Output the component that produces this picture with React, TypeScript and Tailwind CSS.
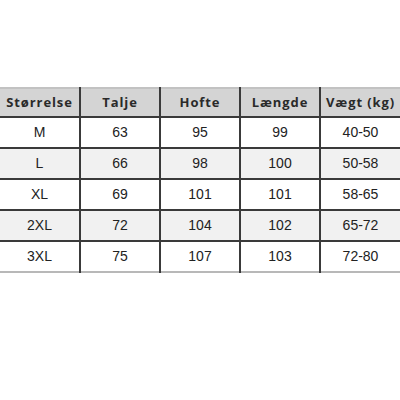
const headers = ["Størrelse", "Talje", "Hofte", "Længde", "Vægt (kg)"];

const rows = [
  ["M", "63", "95", "99", "40-50"],
  ["L", "66", "98", "100", "50-58"],
  ["XL", "69", "101", "101", "58-65"],
  ["2XL", "72", "104", "102", "65-72"],
  ["3XL", "75", "107", "103", "72-80"],
];

export default function App() {
  return (
    <div className="w-[400px] h-[400px] bg-white pt-[87px]">
      <table className="w-full table-fixed border-collapse">
        <thead>
          <tr className="h-[29px] bg-[#d4d4d4] border-t-2 border-t-[#c2c2c2]">
            {headers.map((h, i) => (
              <th
                key={h}
                className={`p-0 text-center text-[13px] font-bold tracking-[0.9px] text-[#2a2a2a] font-['Open_Sans',sans-serif] ${
                  i > 0 ? "border-l-2 border-l-[#3a3a3a]" : ""
                }`}
              >
                {h}
              </th>
            ))}
          </tr>
        </thead>
        <tbody>
          {rows.map((r, ri) => (
            <tr
              key={r[0]}
              className={`h-[31px] border-t-2 border-t-[#3a3a3a] ${
                ri % 2 === 1 ? "bg-[#f1f1f1]" : "bg-white"
              } ${ri === rows.length - 1 ? "border-b-2 border-b-[#b8b8b8]" : ""}`}
            >
              {r.map((c, ci) => (
                <td
                  key={ci}
                  className={`p-0 text-center text-[14px] text-[#222] font-['Liberation_Sans',Arial,sans-serif] ${
                    ci > 0 ? "border-l-2 border-l-[#3a3a3a]" : ""
                  }`}
                >
                  {c}
                </td>
              ))}
            </tr>
          ))}
        </tbody>
      </table>
    </div>
  );
}
